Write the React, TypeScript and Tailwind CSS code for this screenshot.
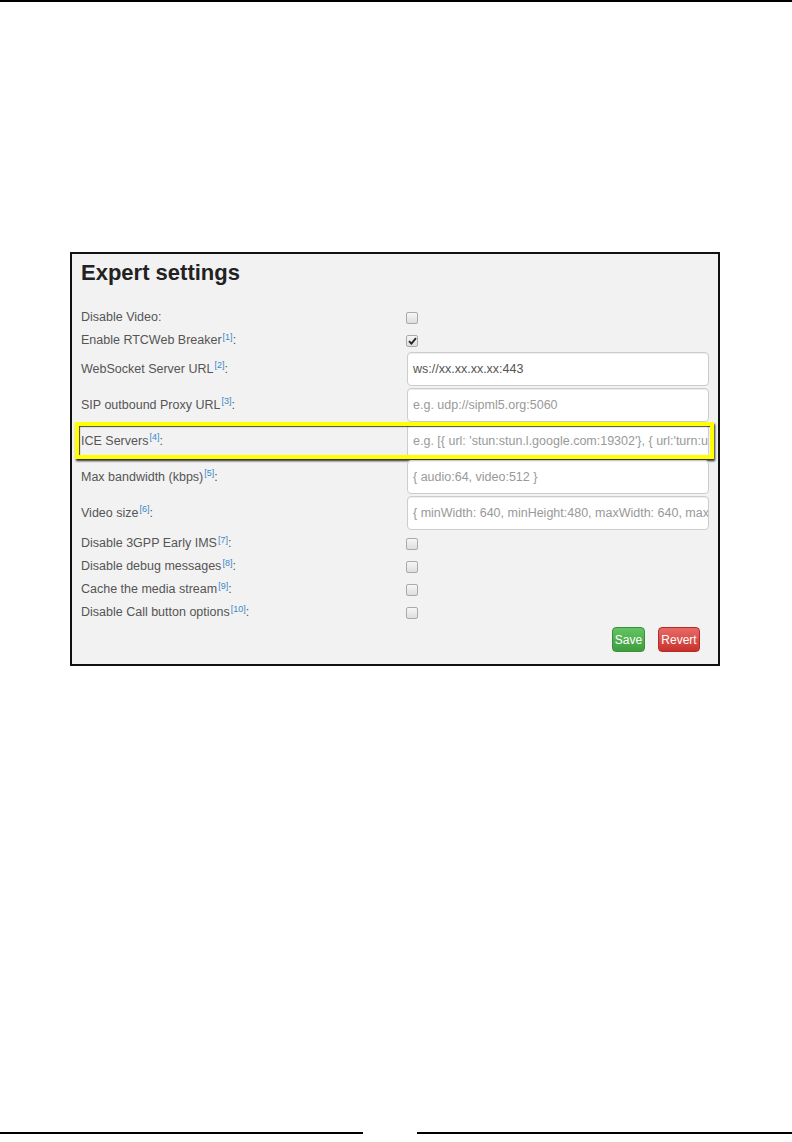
import React from "react";

type Row =
  | { kind: "check"; label: string; note?: string; checked?: boolean }
  | { kind: "input"; label: string; note?: string; value?: string; placeholder?: string; highlight?: boolean };

const rows: Row[] = [
  { kind: "check", label: "Disable Video" },
  { kind: "check", label: "Enable RTCWeb Breaker", note: "1", checked: true },
  { kind: "input", label: "WebSocket Server URL", note: "2", value: "ws://xx.xx.xx.xx:443" },
  { kind: "input", label: "SIP outbound Proxy URL", note: "3", placeholder: "e.g. udp://sipml5.org:5060" },
  {
    kind: "input",
    label: "ICE Servers",
    note: "4",
    placeholder: "e.g. [{ url: 'stun:stun.l.google.com:19302'}, { url:'turn:user@numb.viagenie.ca', credential:'myPassword'}]",
    highlight: true,
  },
  { kind: "input", label: "Max bandwidth (kbps)", note: "5", placeholder: "{ audio:64, video:512 }" },
  {
    kind: "input",
    label: "Video size",
    note: "6",
    placeholder: "{ minWidth: 640, minHeight:480, maxWidth: 640, maxHeight:480 }",
  },
  { kind: "check", label: "Disable 3GPP Early IMS", note: "7" },
  { kind: "check", label: "Disable debug messages", note: "8" },
  { kind: "check", label: "Cache the media stream", note: "9" },
  { kind: "check", label: "Disable Call button options", note: "10" },
];

function Label({ text, note }: { text: string; note?: string }) {
  return (
    <span className="text-[12.5px] text-[#555]">
      {text}
      {note && <sup className="text-[9px] text-[#3a87c8] ml-[1px]">[{note}]</sup>}:
    </span>
  );
}

function Box({ checked }: { checked?: boolean }) {
  return (
    <span className="flex items-center justify-center w-[12px] h-[12px] rounded-[2px] border border-[#aaa] bg-gradient-to-b from-[#f6f6f6] to-[#dedede]">
      {checked && (
        <svg width="9" height="8" viewBox="0 0 9 8">
          <path d="M1 4.2 L3.4 6.6 L8 1.2" fill="none" stroke="#222" strokeWidth="1.8" />
        </svg>
      )}
    </span>
  );
}

export default function App() {
  return (
    <div className="h-[1142px] flex flex-col bg-white" style={{ fontFamily: "'Liberation Sans', Arial, sans-serif" }}>
      <div className="h-[2px] bg-black" />

      <div className="mt-[250px] ml-[70px] w-[650px] border-2 border-[#111] bg-[#f2f2f2] pl-[9px] pr-[9px] pt-[5px] pb-[12px]">
        <h1 className="text-[22px] leading-[28px] font-bold text-[#222] mb-[19px]">Expert settings</h1>

        {rows.map((r) =>
          r.kind === "check" ? (
            <div key={r.label} className="grid grid-cols-[325px_1fr] items-center h-[23px]">
              <Label text={r.label} note={r.note} />
              <Box checked={r.checked} />
            </div>
          ) : (
            <div key={r.label} className="relative grid grid-cols-[325px_1fr] items-center h-[36px] pb-[2px]">
              <Label text={r.label} note={r.note} />
              <div className="h-[34px] ml-[1px] flex items-center px-[5px] bg-white border border-[#ccc] rounded-[4px] shadow-[inset_0_1px_1px_rgba(0,0,0,0.075)] overflow-hidden whitespace-nowrap text-[12.5px]">
                {r.value ? (
                  <span className="text-[#555]">{r.value}</span>
                ) : (
                  <span className="text-[#999]">{r.placeholder}</span>
                )}
              </div>
              {r.highlight && (
                <div className="absolute -left-[6px] -right-[5px] -top-[2px] h-[37px] border-[4px] border-[#ffff00] shadow-[1px_2px_2px_rgba(0,0,0,0.85),inset_1px_1px_1px_rgba(0,0,0,0.7)]" />
              )}
            </div>
          )
        )}

        <div className="flex justify-end gap-[13px] mt-[3px] pr-[9px]">
          <button className="h-[25px] w-[33px] rounded-[4px] text-white text-[12px] bg-gradient-to-b from-[#62c462] to-[#3f9e3f] border border-[#3a8f3a]">
            Save
          </button>
          <button className="h-[25px] w-[42px] rounded-[4px] text-white text-[12px] bg-gradient-to-b from-[#e86a66] to-[#c9302c] border border-[#b52b27]">
            Revert
          </button>
        </div>
      </div>

      <div className="mt-auto mb-[8px] flex justify-between">
        <div className="w-[363px] h-[2px] bg-black" />
        <div className="w-[375px] h-[2px] bg-black" />
      </div>
    </div>
  );
}
